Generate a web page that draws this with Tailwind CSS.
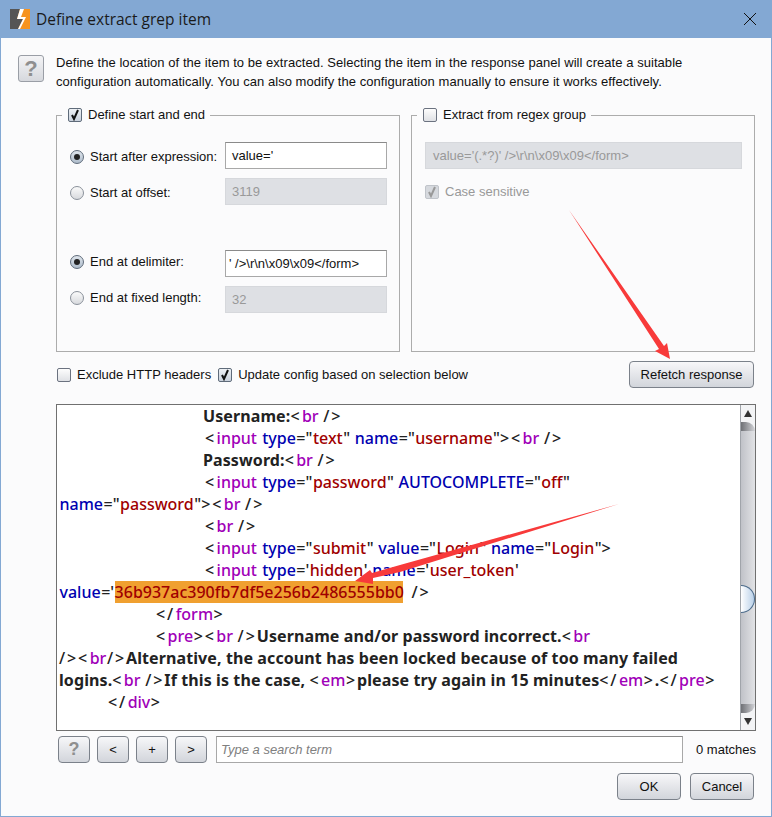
<!DOCTYPE html>
<html lang="en">
<head>
    <meta charset="UTF-8">
    <title>Define extract grep item</title>
    <script src="https://cdn.jsdelivr.net/npm/@tailwindcss/browser@4"></script>
</head>
<body class="bg-[#83a8d3]">
<div class="relative w-[772px] h-[817px] overflow-hidden font-['Liberation_Sans',sans-serif] text-[13px] text-[#111]">

    <!-- title bar -->
    <div class="h-[38px] flex items-center pl-[10px] pr-[16px] bg-[#83a8d3]">
        <svg width="20" height="20" viewBox="0 0 20 20">
            <rect width="20" height="20" fill="#f7931e"/>
            <path d="M0 0H10L7 10H13L8 20H0Z" fill="#555"/>
            <path d="M10 0H14L11 8H16L10 20H8L13 10H7Z" fill="#fff"/>
        </svg>
        <span class="ml-[6px] mt-[1px] text-[15.5px] text-[#1a1a1a] font-['Open_Sans',sans-serif]">Define extract grep item</span>
        <svg class="ml-auto" width="12" height="12" viewBox="0 0 12 12"><path d="M0 0L12 12M12 0L0 12" stroke="#111" stroke-width="1"/></svg>
    </div>

    <!-- dialog body -->
    <div class="mx-[1px] h-[778px] bg-[#fbfbfc] px-[17px] pt-[14px]">
        <div class="flex">
            <div class="w-[26px] h-[27px] mt-[3px] rounded-[3px] border border-[#9a9ea6] bg-gradient-to-b from-[#f4f4f6] to-[#d6d8dd] flex items-center justify-center text-[22px] font-bold text-[#8f8f8f]">?</div>
            <div class="ml-[12px] leading-[19px] tracking-[0.05px] pt-[1px]">
                <p>Define the location of the item to be extracted. Selecting the item in the response panel will create a suitable</p>
                <p>configuration automatically. You can also modify the configuration manually to ensure it works effectively.</p>
            </div>
        </div>

        <div class="mt-[16px] ml-[38px] grid grid-cols-[344px_344px] gap-x-[11px]">
            <!-- start and end -->
            <fieldset class="h-[245px] border border-[#acacac] pl-[13px]">
                <legend class="ml-[-8px] flex items-center h-[16px] pl-[6px] pr-[5px]">
                    <span class="w-[14px] h-[14px] rounded-[2px] border border-[#5f6b7a] bg-gradient-to-b from-[#eef1f5] to-[#c9d1dc] flex items-center justify-center">
                        <svg width="12" height="12" viewBox="0 0 12 12"><path d="M3 6L5 10L9 1" fill="none" stroke="#111" stroke-width="2"/></svg>
                    </span>
                    <span class="ml-[6px]">Define start and end</span>
                </legend>
                <div class="mt-[19px] flex items-center h-[27px]">
                    <span class="mt-[3px] w-[14px] h-[14px] rounded-full border border-[#5f6b7a] bg-gradient-to-b from-[#dfe5ec] to-[#aebccb] flex items-center justify-center"><span class="w-[6px] h-[6px] rounded-full bg-[#222]"></span></span>
                    <span class="mt-[3px] ml-[6px] w-[135px]">Start after expression:</span>
                    <span class="w-[162px] h-[27px] border border-[#a8a8a8] border-t-[#8a8a8a] bg-white pl-[6px] leading-[25px]">value='</span>
                </div>
                <div class="mt-[9px] flex items-center h-[27px]">
                    <span class="mt-[3px] w-[14px] h-[14px] rounded-full border border-[#8a919a] bg-gradient-to-b from-[#fafafa] to-[#d8dade]"></span>
                    <span class="mt-[3px] ml-[6px] w-[135px]">Start at offset:</span>
                    <span class="w-[162px] h-[27px] border border-[#d6d8dc] bg-[#dee0e4] pl-[6px] leading-[25px] text-[#999]">3119</span>
                </div>
                <div class="mt-[45px] flex items-center h-[27px]">
                    <span class="mb-[3px] w-[14px] h-[14px] rounded-full border border-[#5f6b7a] bg-gradient-to-b from-[#dfe5ec] to-[#aebccb] flex items-center justify-center"><span class="w-[6px] h-[6px] rounded-full bg-[#222]"></span></span>
                    <span class="mb-[3px] ml-[6px] w-[135px]">End at delimiter:</span>
                    <span class="w-[162px] h-[27px] border border-[#a8a8a8] border-t-[#8a8a8a] bg-white pl-[3px] leading-[25px]">' /&gt;\r\n\x09\x09&lt;/form&gt;</span>
                </div>
                <div class="mt-[9px] flex items-center h-[27px]">
                    <span class="mb-[3px] w-[14px] h-[14px] rounded-full border border-[#8a919a] bg-gradient-to-b from-[#fafafa] to-[#d8dade]"></span>
                    <span class="mb-[3px] ml-[6px] w-[135px]">End at fixed length:</span>
                    <span class="w-[162px] h-[27px] border border-[#d6d8dc] bg-[#dee0e4] pl-[6px] leading-[25px] text-[#999]">32</span>
                </div>
            </fieldset>

            <!-- regex group -->
            <fieldset class="h-[245px] border border-[#acacac] pl-[13px]">
                <legend class="ml-[-8px] flex items-center h-[16px] pl-[6px] pr-[5px]">
                    <span class="w-[14px] h-[14px] rounded-[2px] border border-[#6b7280] bg-gradient-to-b from-[#fdfdfd] to-[#dfe1e5]"></span>
                    <span class="ml-[6px]">Extract from regex group</span>
                </legend>
                <div class="mt-[19px] w-[317px] h-[27px] border border-[#d6d8dc] bg-[#dee0e4] pl-[7px] leading-[25px] text-[#999]">value='(.*?)' /&gt;\r\n\x09\x09&lt;/form&gt;</div>
                <div class="mt-[9px] flex items-center h-[27px] text-[#999]">
                    <span class="w-[14px] h-[14px] rounded-[2px] border border-[#c0c4ca] bg-[#d6d9de] flex items-center justify-center">
                        <svg width="12" height="12" viewBox="0 0 12 12"><path d="M3 6L5 10L9 1" fill="none" stroke="#999" stroke-width="2"/></svg>
                    </span>
                    <span class="ml-[6px]">Case sensitive</span>
                </div>
            </fieldset>
        </div>

        <!-- options row -->
        <div class="mt-[9px] ml-[39px] h-[27px] flex items-center">
            <span class="w-[14px] h-[14px] rounded-[2px] border border-[#6b7280] bg-gradient-to-b from-[#fdfdfd] to-[#dfe1e5]"></span>
            <span class="ml-[6px]">Exclude HTTP headers</span>
            <span class="ml-[7px] w-[14px] h-[14px] rounded-[2px] border border-[#5f6b7a] bg-gradient-to-b from-[#eef1f5] to-[#c9d1dc] flex items-center justify-center">
                <svg width="12" height="12" viewBox="0 0 12 12"><path d="M3 6L5 10L9 1" fill="none" stroke="#111" stroke-width="2"/></svg>
            </span>
            <span class="ml-[6px]">Update config based on selection below</span>
            <span class="ml-auto w-[125px] h-[27px] rounded-[4px] border border-[#7b818a] bg-gradient-to-b from-[#f7f7f9] to-[#d2d5db] flex items-center justify-center">Refetch response</span>
        </div>

        <!-- response panel -->
        <div class="mt-[16px] ml-[38px] w-[700px] h-[327px] border border-[#707070] bg-white flex">
            <div class="flex-1 font-['Noto_Sans',sans-serif] text-[16px] font-medium leading-[22px] text-[#222] pl-[2px] whitespace-nowrap [&_span]:mx-[0.5px] [&_b]:tracking-[0.1px] [&_i]:not-italic [&_i]:tracking-[1.9px]">
                <div class="pl-[144px] h-[22px]"><b>Username:</b><i>&lt;</i><span class="text-[#a000b8]">br</span> <i>/&gt;</i></div>
                <div class="pl-[146px] h-[22px]"><i>&lt;</i><span class="text-[#a000b8]">input</span> <span class="text-[#0000b0]">type</span>="<span class="text-[#a00000]">text</span>" <span class="text-[#0000b0]">name</span>="<span class="text-[#a00000]">username</span>"<i>&gt;&lt;</i><span class="text-[#a000b8]">br</span> <i>/&gt;</i></div>
                <div class="pl-[144px] h-[22px]"><b>Password:</b><i>&lt;</i><span class="text-[#a000b8]">br</span> <i>/&gt;</i></div>
                <div class="pl-[146px] h-[22px]"><i>&lt;</i><span class="text-[#a000b8]">input</span> <span class="text-[#0000b0]">type</span>="<span class="text-[#a00000]">password</span>" <span class="text-[#0000b0]">AUTOCOMPLETE</span>="<span class="text-[#a00000]">off</span>"</div>
                <div class="h-[22px]"><span class="text-[#0000b0]">name</span>="<span class="text-[#a00000]">password</span>"<i>&gt;&lt;</i><span class="text-[#a000b8]">br</span> <i>/&gt;</i></div>
                <div class="pl-[146px] h-[22px]"><i>&lt;</i><span class="text-[#a000b8]">br</span> <i>/&gt;</i></div>
                <div class="pl-[146px] h-[22px]"><i>&lt;</i><span class="text-[#a000b8]">input</span> <span class="text-[#0000b0]">type</span>="<span class="text-[#a00000]">submit</span>" <span class="text-[#0000b0]">value</span>="<span class="text-[#a00000]">Login</span>" <span class="text-[#0000b0]">name</span>="<span class="text-[#a00000]">Login</span>"<i>&gt;</i></div>
                <div class="pl-[146px] h-[22px]"><i>&lt;</i><span class="text-[#a000b8]">input</span> <span class="text-[#0000b0]">type</span>='<span class="text-[#a00000]">hidden</span>' <span class="text-[#0000b0]">name</span>='<span class="text-[#a00000]">user_token</span>'</div>
                <div class="h-[22px]"><span class="text-[#0000b0]">value</span>='<span class="bg-[#f0a030] text-[#a00000] inline-block h-[22px] w-[288px]">36b937ac390fb7df5e256b2486555bb0</span>&nbsp; <i>/&gt;</i></div>
                <div class="pl-[97px] h-[22px]"><i>&lt;/</i><span class="text-[#a000b8]">form</span><i>&gt;</i></div>
                <div class="pl-[97px] h-[22px]"><i>&lt;</i><span class="text-[#a000b8]">pre</span><i>&gt;&lt;</i><span class="text-[#a000b8]">br</span> <i>/&gt;</i><b>Username and/or password incorrect.</b><i>&lt;</i><span class="text-[#a000b8]">br</span></div>
                <div class="h-[22px]"><i>/&gt;&lt;</i><span class="text-[#a000b8]">br</span><i>/&gt;</i><b>Alternative, the account has been locked because of too many failed</b></div>
                <div class="h-[22px]"><b>logins.</b><i>&lt;</i><span class="text-[#a000b8]">br</span> <i>/&gt;</i><b>If this is the case, </b><i>&lt;</i><span class="text-[#a000b8]">em</span><i>&gt;</i><b>please try again in 15 minutes</b><i>&lt;/</i><span class="text-[#a000b8]">em</span><i>&gt;</i><b>.</b><i>&lt;/</i><span class="text-[#a000b8]">pre</span><i>&gt;</i></div>
                <div class="pl-[49px] h-[22px]"><i>&lt;/</i><span class="text-[#a000b8]">div</span><i>&gt;</i></div>
            </div>
            <!-- scrollbar -->
            <div class="w-[15px] border-l border-[#a0a4aa] flex flex-col bg-gradient-to-r from-[#c0c2c8] to-[#e2e3e6]">
                <div class="h-[17px] bg-[#f3f4f6] flex items-center justify-center"><svg width="8" height="7" viewBox="0 0 8 7"><path d="M4 0L8 7H0Z" fill="#333"/></svg></div>
                <div class="h-[9px] bg-[#f3f4f6]"><div class="h-[9px] rounded-tr-[14px] bg-gradient-to-r from-[#6f7176] to-[#d4d5d9]"></div></div>
                <div class="h-[154px]"></div>
                <div class="h-[28px] rounded-r-full border border-[#4a6a8a] border-l-0 bg-gradient-to-r from-white to-[#b9d0e8]"></div>
                <div class="flex-1"></div>
                <div class="h-[9px] bg-[#f3f4f6]"><div class="h-[9px] rounded-br-[14px] bg-gradient-to-r from-[#6f7176] to-[#d4d5d9]"></div></div>
                <div class="h-[17px] bg-[#f3f4f6] flex items-center justify-center"><svg width="8" height="7" viewBox="0 0 8 7"><path d="M4 7L8 0H0Z" fill="#333"/></svg></div>
            </div>
        </div>

        <!-- search row -->
        <div class="mt-[5px] ml-[40px] flex items-center h-[27px]">
            <span class="shrink-0 w-[32px] h-[27px] rounded-[4px] border border-[#7b818a] bg-gradient-to-b from-[#f7f7f9] to-[#d2d5db] flex items-center justify-center text-[18px] font-bold text-[#8f8f8f]">?</span>
            <span class="shrink-0 ml-[7px] w-[32px] h-[27px] rounded-[4px] border border-[#7b818a] bg-gradient-to-b from-[#f7f7f9] to-[#d2d5db] flex items-center justify-center">&lt;</span>
            <span class="shrink-0 ml-[7px] w-[32px] h-[27px] rounded-[4px] border border-[#7b818a] bg-gradient-to-b from-[#f7f7f9] to-[#d2d5db] flex items-center justify-center">+</span>
            <span class="shrink-0 ml-[7px] w-[32px] h-[27px] rounded-[4px] border border-[#7b818a] bg-gradient-to-b from-[#f7f7f9] to-[#d2d5db] flex items-center justify-center">&gt;</span>
            <span class="ml-[9px] w-[467px] h-[27px] shrink-0 border border-[#a8a8a8] border-t-[#8a8a8a] bg-white pl-[4px] leading-[25px] italic text-[#808080]">Type a search term</span>
            <span class="ml-[13px] shrink-0 whitespace-nowrap">0 matches</span>
        </div>

        <!-- footer buttons -->
        <div class="mt-[10px] flex justify-end gap-[9px]">
            <span class="w-[64px] h-[27px] rounded-[4px] border border-[#7b818a] bg-gradient-to-b from-[#f7f7f9] to-[#d2d5db] flex items-center justify-center">OK</span>
            <span class="w-[64px] h-[27px] rounded-[4px] border border-[#7b818a] bg-gradient-to-b from-[#f7f7f9] to-[#d2d5db] flex items-center justify-center">Cancel</span>
        </div>
    </div>

    <!-- red annotation arrows drawn over the dialog -->
    <svg class="absolute left-0 top-0 pointer-events-none" width="772" height="817" viewBox="0 0 772 817">
        <polygon points="569,210 664,346 667,343 670,359 655,351 659,349" fill="#f83a3a"/>
        <polygon points="619,504 400,572 373,578 373,584 355,581 370,570 372,573 400,565" fill="#f83a3a"/>
    </svg>
</div>
</body>
</html>
